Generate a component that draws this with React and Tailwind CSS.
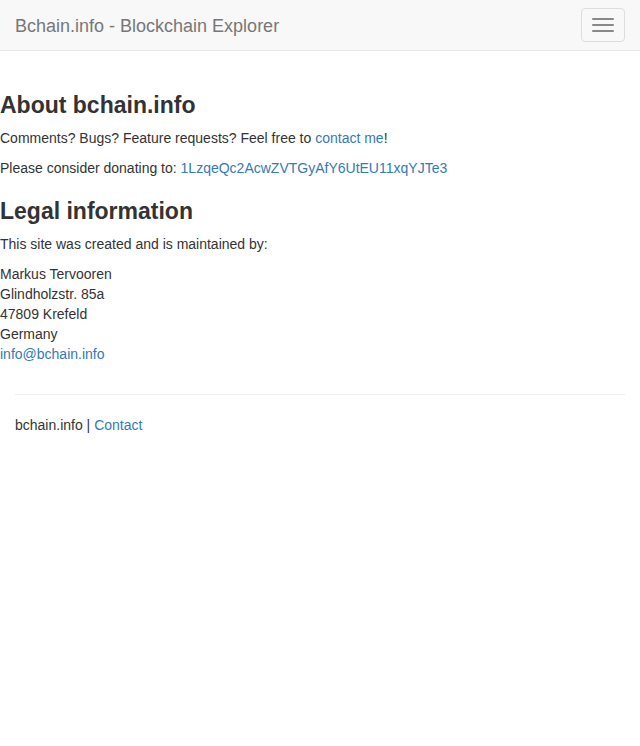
import React from 'react';

const App = () => {
    return (
        <div className="min-h-[746px] bg-white text-[#333] text-[14px] leading-[20px]" style={{ fontFamily: '"Liberation Sans", Arial, sans-serif' }}>
            <nav className="h-[51px] bg-[#f8f8f8] border-b border-[#e7e7e7] flex items-start justify-between">
                <a className="px-[15px] pt-[16px] pb-[14px] text-[18px] leading-[20px] text-[#777]">Bchain.info - Blockchain Explorer</a>
                <button className="mt-[8px] mr-[15px] w-[44px] h-[34px] border border-[#ddd] rounded-[4px] flex flex-col items-center justify-center gap-[4px]">
                    <span className="block w-[22px] h-[2px] rounded-[1px] bg-[#888]" />
                    <span className="block w-[22px] h-[2px] rounded-[1px] bg-[#888]" />
                    <span className="block w-[22px] h-[2px] rounded-[1px] bg-[#888]" />
                </button>
            </nav>

            <div className="pt-[41px]">
                <h3 className="text-[23px] leading-[26.4px] font-bold mb-[10px]">About bchain.info</h3>
                <p className="mb-[10px]">
                    Comments? Bugs? Feature requests? Feel free to <a className="text-[#337ab7]">contact me</a>!
                </p>
                <p className="mb-[10px]">
                    Please consider donating to: <a className="text-[#337ab7]">1LzqeQc2AcwZVTGyAfY6UtEU11xqYJTe3</a>
                </p>

                <h3 className="mt-[20px] text-[23px] leading-[26.4px] font-bold mb-[9px]">Legal information</h3>
                <p className="mb-[10px]">This site was created and is maintained by:</p>
                <address className="not-italic">
                    Markus Tervooren<br />
                    Glindholzstr. 85a<br />
                    47809 Krefeld<br />
                    Germany<br />
                    <a className="text-[#337ab7]">info@bchain.info</a>
                </address>
            </div>

            <footer className="px-[15px] mt-[30px]">
                <hr className="border-0 border-t border-[#eee]" />
                <p className="mt-[20px]">
                    bchain.info | <a className="text-[#337ab7]">Contact</a>
                </p>
            </footer>
        </div>
    );
};

export default App;
